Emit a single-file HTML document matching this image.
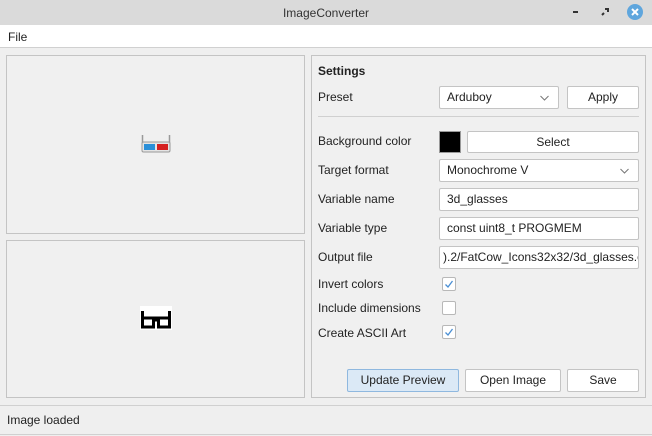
<!DOCTYPE html>
<html><head><style>
*{box-sizing:border-box;margin:0;padding:0}
body{width:652px;height:436px;background:#efefef;font-family:"Liberation Sans",sans-serif;font-size:12px;color:#222;position:relative;overflow:hidden}
.a{position:absolute}
.t{position:absolute;line-height:14px;white-space:nowrap}
.btn{position:absolute;background:#fff;border:1px solid #c4c4c4;border-radius:2px;text-align:center;line-height:21px}
.inp{position:absolute;background:#fff;border:1px solid #c4c4c4;border-radius:2px;padding-left:7px;line-height:21px;overflow:hidden;white-space:nowrap}
.cb{position:absolute;width:14px;height:14px;background:#fff;border:1px solid #b8b8b8;border-radius:2px}
.arr{position:absolute;right:9px;top:8px}
</style></head><body>
<div class="a" style="left:0;top:0;width:652px;height:25px;background:#dadada"></div>
<div class="t" style="left:0;width:652px;top:6px;text-align:center;color:#333">ImageConverter</div>
<div class="a" style="left:573px;top:11px;width:5px;height:2px;background:#333"></div>
<svg class="a" style="left:600px;top:7px" width="10" height="10"><path d="M5 2h3v3M2 8l2-2" stroke="#333" stroke-width="2" fill="none"/></svg>
<div class="a" style="left:627px;top:4px;width:16px;height:16px;border-radius:50%;background:#5fa6dd"></div>
<svg class="a" style="left:627px;top:4px" width="16" height="16"><path d="M5 5l6 6M11 5l-6 6" stroke="#fff" stroke-width="2"/></svg>
<div class="a" style="left:0;top:25px;width:652px;height:23px;background:#fff;border-bottom:1px solid #d0d0d0"></div>
<div class="t" style="left:8px;top:30px">File</div>

<div class="a" style="left:6px;top:55px;width:299px;height:179px;border:1px solid #c4c4c4;background:#f0f0f0"></div>
<div class="a" style="left:6px;top:240px;width:299px;height:158px;border:1px solid #c4c4c4;background:#f0f0f0"></div>
<svg class="a" style="left:140px;top:134px" width="32" height="20"><path d="M2.5 1v8h27V1" fill="none" stroke="#999" stroke-width="1.5"/><rect x="2" y="8" width="28" height="10" rx="1.5" fill="#e4e4e4" stroke="#999"/><rect x="4" y="10" width="11" height="6" fill="#2a8fd8"/><rect x="17" y="10" width="11" height="6" fill="#d52020"/></svg>
<div class="a" style="left:140px;top:306px;width:32px;height:24px;background:#fff"></div>
<svg class="a" style="left:140px;top:306px" width="32" height="24"><path d="M2.5 5v16h11v-7h5v7h11V5M2.5 12h27" fill="none" stroke="#000" stroke-width="3"/></svg>

<div class="a" style="left:311px;top:55px;width:335px;height:343px;border:1px solid #c4c4c4;background:#f0f0f0"></div>
<div class="t" style="left:318px;top:64px;font-weight:bold">Settings</div>
<div class="t" style="left:318px;top:90px">Preset</div>
<div class="inp" style="left:439px;top:86px;width:120px;height:23px">Arduboy<svg class="arr" width="9" height="6"><path d="M0.5 1l4 4 4-4" stroke="#777" fill="none"/></svg></div>
<div class="btn" style="left:567px;top:86px;width:72px;height:23px">Apply</div>
<div class="a" style="left:318px;top:116px;width:321px;height:1px;background:#d0d0d0"></div>
<div class="t" style="left:318px;top:134px">Background color</div>
<div class="a" style="left:439px;top:131px;width:22px;height:22px;background:#000;border:1px solid #999"></div>
<div class="btn" style="left:467px;top:131px;width:172px;height:22px">Select</div>
<div class="t" style="left:318px;top:163px">Target format</div>
<div class="inp" style="left:439px;top:159px;width:200px;height:23px">Monochrome V<svg class="arr" width="9" height="6"><path d="M0.5 1l4 4 4-4" stroke="#777" fill="none"/></svg></div>
<div class="t" style="left:318px;top:192px">Variable name</div>
<div class="inp" style="left:439px;top:188px;width:200px;height:23px">3d_glasses</div>
<div class="t" style="left:318px;top:221px">Variable type</div>
<div class="inp" style="left:439px;top:217px;width:200px;height:23px">const uint8_t PROGMEM</div>
<div class="t" style="left:318px;top:250px">Output file</div>
<div class="inp" style="left:439px;top:246px;width:200px;height:23px;padding-left:3px">).2/FatCow_Icons32x32/3d_glasses.c</div>
<div class="t" style="left:318px;top:277px">Invert colors</div>
<div class="cb" style="left:442px;top:277px"><svg width="12" height="12" style="position:absolute;left:0;top:0"><path d="M2.5 6.5l2.5 2.5 4.5-6" stroke="#4a8fd4" stroke-width="1.3" fill="none"/></svg></div>
<div class="t" style="left:318px;top:301px">Include dimensions</div>
<div class="cb" style="left:442px;top:301px"></div>
<div class="t" style="left:318px;top:326px">Create ASCII Art</div>
<div class="cb" style="left:442px;top:325px"><svg width="12" height="12" style="position:absolute;left:0;top:0"><path d="M2.5 6.5l2.5 2.5 4.5-6" stroke="#4a8fd4" stroke-width="1.3" fill="none"/></svg></div>
<div class="btn" style="left:347px;top:369px;width:112px;height:23px;background:#dbe9f6;border-color:#8fb8df">Update Preview</div>
<div class="btn" style="left:465px;top:369px;width:96px;height:23px">Open Image</div>
<div class="btn" style="left:567px;top:369px;width:72px;height:23px">Save</div>

<div class="a" style="left:0;top:405px;width:652px;height:1px;background:#d0d0d0"></div>
<div class="a" style="left:0;top:434px;width:652px;height:1px;background:#d0d0d0"></div>
<div class="t" style="left:7px;top:413px">Image loaded</div>
</body></html>
